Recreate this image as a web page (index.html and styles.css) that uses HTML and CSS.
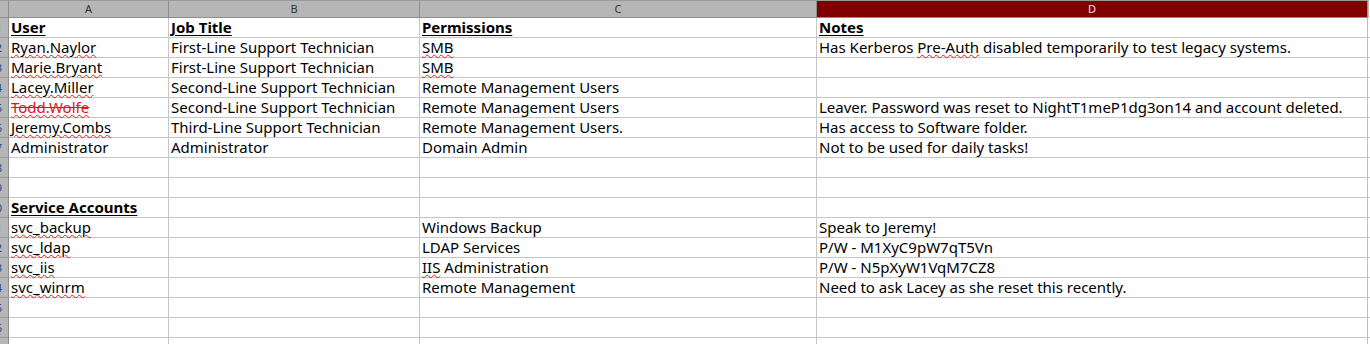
FILE: index.html
```html
<!DOCTYPE html>
<html>
<head>
<meta charset="utf-8">
<link rel="stylesheet" href="styles.css">
</head>
<body>
<div class="sheet">
  <div class="row colhead">
    <div class="corner"></div>
    <div class="ch">A</div>
    <div class="ch">B</div>
    <div class="ch">C</div>
    <div class="ch sel">D</div>
    <div class="ch rest"></div>
  </div>
  <div class="row">
    <div class="rh"><span>1</span></div>
    <div class="c"><span class="hd">User</span></div>
    <div class="c"><span class="hd">Job Title</span></div>
    <div class="c"><span class="hd">Permissions</span></div>
    <div class="c"><span class="hd">Notes</span></div>
    <div class="c rest"></div>
  </div>
  <div class="row">
    <div class="rh"><span>2</span></div>
    <div class="c"><span class="sp">Ryan.Naylor</span></div>
    <div class="c">First-Line Support Technician</div>
    <div class="c"><span class="sp">SMB</span></div>
    <div class="c">Has Kerberos <span class="sp">Pre-Auth</span> disabled temporarily to test legacy systems.</div>
    <div class="c rest"></div>
  </div>
  <div class="row">
    <div class="rh"><span>3</span></div>
    <div class="c"><span class="sp">Marie.Bryant</span></div>
    <div class="c">First-Line Support Technician</div>
    <div class="c"><span class="sp">SMB</span></div>
    <div class="c"></div>
    <div class="c rest"></div>
  </div>
  <div class="row">
    <div class="rh"><span>4</span></div>
    <div class="c"><span class="sp">Lacey.Miller</span></div>
    <div class="c">Second-Line Support Technician</div>
    <div class="c">Remote Management Users</div>
    <div class="c"></div>
    <div class="c rest"></div>
  </div>
  <div class="row">
    <div class="rh"><span>5</span></div>
    <div class="c"><span class="strike"><span class="sp">Todd.Wolfe</span></span></div>
    <div class="c">Second-Line Support Technician</div>
    <div class="c">Remote Management Users</div>
    <div class="c">Leaver. Password was reset to NightT1meP1dg3on14 and account deleted.</div>
    <div class="c rest"></div>
  </div>
  <div class="row">
    <div class="rh"><span>6</span></div>
    <div class="c"><span class="sp">Jeremy.Combs</span></div>
    <div class="c">Third-Line Support Technician</div>
    <div class="c">Remote Management Users.</div>
    <div class="c">Has access to Software folder.</div>
    <div class="c rest"></div>
  </div>
  <div class="row">
    <div class="rh"><span>7</span></div>
    <div class="c">Administrator</div>
    <div class="c">Administrator</div>
    <div class="c">Domain Admin</div>
    <div class="c">Not to be used for daily tasks!</div>
    <div class="c rest"></div>
  </div>
  <div class="row">
    <div class="rh"><span>8</span></div>
    <div class="c"></div><div class="c"></div><div class="c"></div><div class="c"></div>
    <div class="c rest"></div>
  </div>
  <div class="row">
    <div class="rh"><span>9</span></div>
    <div class="c"></div><div class="c"></div><div class="c"></div><div class="c"></div>
    <div class="c rest"></div>
  </div>
  <div class="row">
    <div class="rh"><span>10</span></div>
    <div class="c"><span class="hd">Service Accounts</span></div>
    <div class="c"></div><div class="c"></div><div class="c"></div>
    <div class="c rest"></div>
  </div>
  <div class="row">
    <div class="rh"><span>11</span></div>
    <div class="c"><span class="sp">svc_backup</span></div>
    <div class="c"></div>
    <div class="c">Windows Backup</div>
    <div class="c">Speak to Jeremy!</div>
    <div class="c rest"></div>
  </div>
  <div class="row">
    <div class="rh"><span>12</span></div>
    <div class="c"><span class="sp">svc_ldap</span></div>
    <div class="c"></div>
    <div class="c">LDAP Services</div>
    <div class="c">P/W - M1XyC9pW7qT5Vn</div>
    <div class="c rest"></div>
  </div>
  <div class="row">
    <div class="rh"><span>13</span></div>
    <div class="c"><span class="sp">svc_iis</span></div>
    <div class="c"></div>
    <div class="c"><span class="sp">IIS</span> Administration</div>
    <div class="c">P/W - N5pXyW1VqM7CZ8</div>
    <div class="c rest"></div>
  </div>
  <div class="row">
    <div class="rh"><span>14</span></div>
    <div class="c"><span class="sp">svc_winrm</span></div>
    <div class="c"></div>
    <div class="c">Remote Management</div>
    <div class="c">Need to ask Lacey as she reset this recently.</div>
    <div class="c rest"></div>
  </div>
  <div class="row">
    <div class="rh"><span>15</span></div>
    <div class="c"></div><div class="c"></div><div class="c"></div><div class="c"></div>
    <div class="c rest"></div>
  </div>
  <div class="row">
    <div class="rh"><span>16</span></div>
    <div class="c"></div><div class="c"></div><div class="c"></div><div class="c"></div>
    <div class="c rest"></div>
  </div>
  <div class="row">
    <div class="rh"><span>17</span></div>
    <div class="c"></div><div class="c"></div><div class="c"></div><div class="c"></div>
    <div class="c rest"></div>
  </div>
</div>
</body>
</html>
```
FILE: styles.css
```css
html, body {
  margin: 0;
  padding: 0;
  background: #ffffff;
  overflow: hidden;
}
.sheet {
  width: 1370px;
  height: 344px;
  overflow: hidden;
  font-family: "Noto Sans", "Open Sans", sans-serif;
  font-size: 15px;
  color: #000;
}
.row {
  display: grid;
  grid-template-columns: 9px 160px 251px 397px 551px 1fr;
  height: 20px;
}
.colhead {
  height: 18px;
}
.corner, .ch {
  box-sizing: border-box;
  background: #b6b6b6;
  border-top: 1px solid #9a9a9a;
  border-right: 1px solid #8e8e8e;
  border-bottom: 1px solid #8e8e8e;
  font-size: 11px;
  line-height: 16px;
  text-align: center;
  color: #333;
}
.ch.sel {
  background: #800000;
  color: #f2e0e0;
  border-right-color: #c08080;
}
.ch.rest {
  background: #ffffff;
  border-top: none;
  border-bottom: none;
  border-right: none;
  border-left: 1px solid #bdbdbd;
}
.rh {
  box-sizing: border-box;
  background: #b6b6b6;
  border-right: 1px solid #8e8e8e;
  border-bottom: 1px solid #9a9a9a;
  display: flex;
  justify-content: flex-end;
  overflow: hidden;
  font-size: 11px;
  line-height: 19px;
  color: #2a4a8a;
  padding-right: 6px;
  white-space: nowrap;
}
.c {
  box-sizing: border-box;
  border-right: 1px solid #c6c6c6;
  border-bottom: 1px solid #c6c6c6;
  padding-left: 2px;
  line-height: 19px;
  height: 20px;
  white-space: nowrap;
  overflow: visible;
}
.c.rest {
  border-right: none;
  border-left: 1px solid #bdbdbd;
  margin-left: -1px;
}
.hd {
  font-weight: bold;
  text-decoration: underline;
  text-underline-offset: 2px;
}
.sp {
  text-decoration: underline wavy #e02020;
  text-decoration-thickness: 1px;
  text-underline-offset: 1px;
}
.strike {
  color: #e8101a;
  text-decoration: line-through #e8101a;
}
```
